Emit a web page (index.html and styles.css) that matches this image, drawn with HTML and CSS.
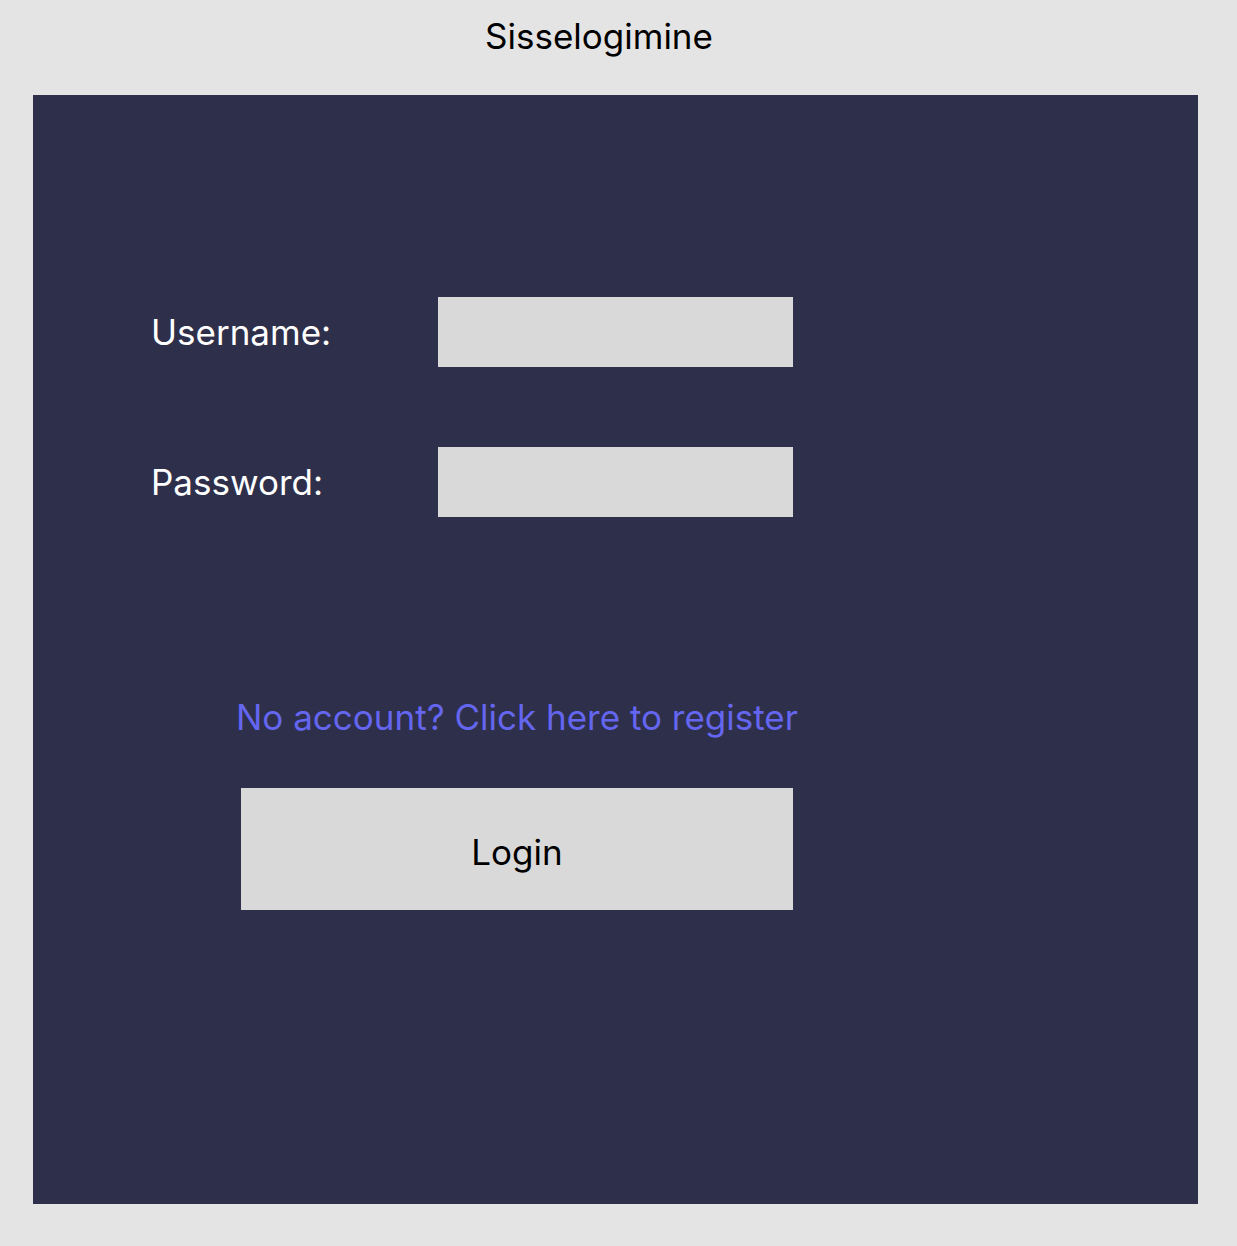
FILE: index.html
```html
<!DOCTYPE html>
<html lang="et">
<head>
<meta charset="utf-8">
<title>Sisselogimine</title>
<link rel="stylesheet" href="styles.css">
</head>
<body>
<header class="top">
  <h1 class="title">Sisselogimine</h1>
</header>
<main class="panel">
  <form class="form">
    <div class="row">
      <label class="label" for="u">Username:</label>
      <input class="field" id="u" type="text">
    </div>
    <div class="row">
      <label class="label" for="p">Password:</label>
      <input class="field" id="p" type="password">
    </div>
    <a class="register" href="#">No account? Click here to register</a>
    <button class="login" type="button">Login</button>
  </form>
</main>
</body>
</html>
```

FILE: styles.css
```css
html, body {
  margin: 0;
  padding: 0;
}
body {
  background: #e4e4e4;
  font-family: Inter, "Noto Sans", sans-serif;
  width: 1237px;
  height: 1246px;
}
.top {
  height: 95px;
  width: 1198px;
}
.title {
  margin: 0;
  padding-top: 14px;
  font-size: 35px;
  font-weight: 400;
  color: #000;
  line-height: 44px;
  text-align: center;
}
.panel {
  margin-left: 33px;
  width: 1165px;
  height: 1109px;
  background: #2e2f4a;
  box-sizing: border-box;
  padding: 202px 0 0 118px;
}
.form {
  display: flex;
  flex-direction: column;
}
.row {
  display: flex;
  align-items: center;
  height: 70px;
  margin-bottom: 80px;
}
.row + .row {
  margin-bottom: 0;
}
.label {
  width: 287px;
  color: #ffffff;
  font-size: 35px;
  line-height: 44px;
}
.field {
  width: 355px;
  height: 70px;
  box-sizing: border-box;
  border: none;
  background: #d9d9d9;
  margin: 0;
  padding: 0;
}
.register {
  margin-top: 178px;
  margin-left: 85px;
  color: #6466f0;
  font-size: 35px;
  line-height: 44px;
  text-decoration: none;
  align-self: flex-start;
}
.login {
  margin-top: 49px;
  margin-left: 90px;
  width: 552px;
  height: 122px;
  border: none;
  background: #d9d9d9;
  color: #000;
  font-family: Inter, "Noto Sans", sans-serif;
  font-size: 35px;
  padding: 6px 0 0 0;
  align-self: flex-start;
}
```
